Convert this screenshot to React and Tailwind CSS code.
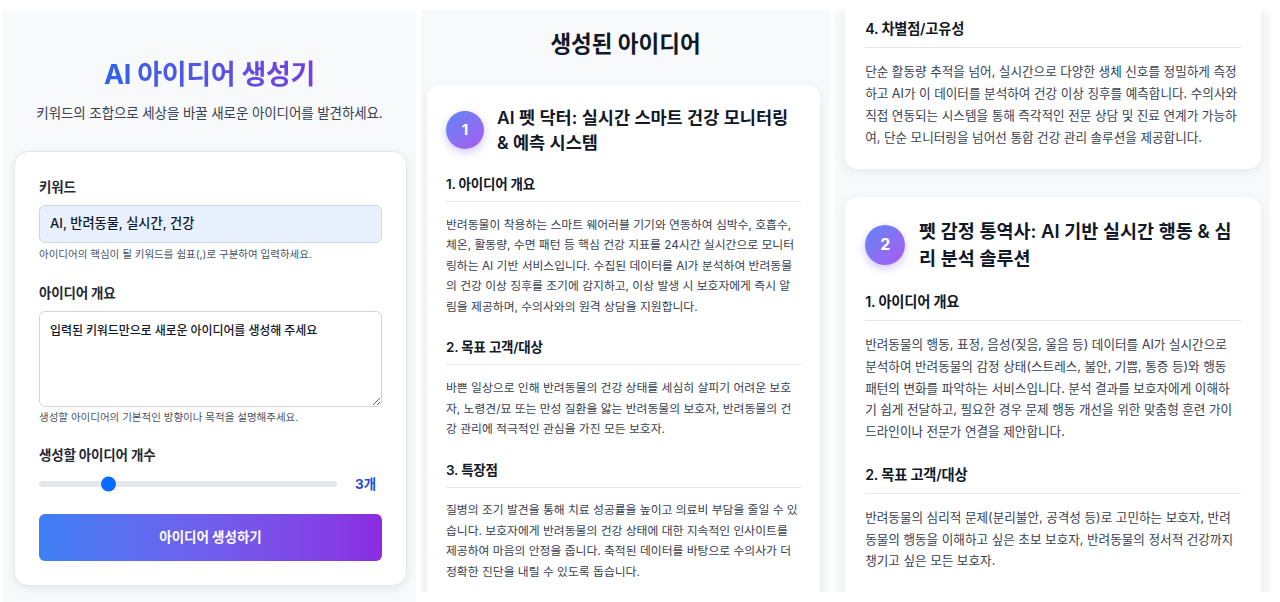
import React from "react";

const sectionsA = [
  {
    h: "1. 아이디어 개요",
    p: "반려동물이 착용하는 스마트 웨어러블 기기와 연동하여 심박수, 호흡수, 체온, 활동량, 수면 패턴 등 핵심 건강 지표를 24시간 실시간으로 모니터링하는 AI 기반 서비스입니다. 수집된 데이터를 AI가 분석하여 반려동물의 건강 이상 징후를 조기에 감지하고, 이상 발생 시 보호자에게 즉시 알림을 제공하며, 수의사와의 원격 상담을 지원합니다.",
  },
  {
    h: "2. 목표 고객/대상",
    p: "바쁜 일상으로 인해 반려동물의 건강 상태를 세심히 살피기 어려운 보호자, 노령견/묘 또는 만성 질환을 앓는 반려동물의 보호자, 반려동물의 건강 관리에 적극적인 관심을 가진 모든 보호자.",
  },
  {
    h: "3. 특장점",
    p: "질병의 조기 발견을 통해 치료 성공률을 높이고 의료비 부담을 줄일 수 있습니다. 보호자에게 반려동물의 건강 상태에 대한 지속적인 인사이트를 제공하여 마음의 안정을 줍니다. 축적된 데이터를 바탕으로 수의사가 더 정확한 진단을 내릴 수 있도록 돕습니다.",
  },
  {
    h: "4. 차별점/고유성",
    p: "단순 활동량 추적을 넘어, 실시간으로 다양한 생체 신호를 정밀하게 측정하고 AI가 이 데이터를 분석하여 건강 이상 징후를 예측합니다. 수의사와 직접 연동되는 시스템을 통해 즉각적인 전문 상담 및 진료 연계가 가능하여, 단순 모니터링을 넘어선 통합 건강 관리 솔루션을 제공합니다.",
  },
];

const sectionsB = [
  {
    h: "1. 아이디어 개요",
    p: "반려동물의 행동, 표정, 음성(짖음, 울음 등) 데이터를 AI가 실시간으로 분석하여 반려동물의 감정 상태(스트레스, 불안, 기쁨, 통증 등)와 행동 패턴의 변화를 파악하는 서비스입니다. 분석 결과를 보호자에게 이해하기 쉽게 전달하고, 필요한 경우 문제 행동 개선을 위한 맞춤형 훈련 가이드라인이나 전문가 연결을 제안합니다.",
  },
  {
    h: "2. 목표 고객/대상",
    p: "반려동물의 심리적 문제(분리불안, 공격성 등)로 고민하는 보호자, 반려동물의 행동을 이해하고 싶은 초보 보호자, 반려동물의 정서적 건강까지 챙기고 싶은 모든 보호자.",
  },
  {
    h: "3. 특장점",
    p: "반려동물의 감정과 행동을 객관적인 데이터로 이해할 수 있어 보호자와 반려동물 사이의 교감을 깊게 합니다.",
  },
];

const P_MAIN = "mt-[12.5px] text-[11.82px] leading-[20.6px] text-[#374151]";
const P_ZOOMED = "mt-[12.5px] text-[11.91px] leading-[20.6px] text-[#374151]";

function Section({ h, p, first, pClass }) {
  return (
    <div className={first ? "" : "mt-[20px]"}>
      <div className="text-[13.5px] leading-[20px] font-semibold text-[#111827] tracking-[-0.2px] pb-[7px] border-b border-[#e5e7eb]">
        {h}
      </div>
      <p className={pClass}>{p}</p>
    </div>
  );
}

function IdeaCard({ num, title, sections, pClass }) {
  return (
    <div className="w-[393px] bg-white rounded-xl shadow-[0_2px_10px_rgba(0,0,0,0.07)] px-[19px] pt-[20px] pb-[20px]">
      <div className="flex items-center gap-[13px]">
        <div className="w-[38px] h-[38px] shrink-0 rounded-full bg-linear-to-br from-[#5a84f6] to-[#a55af0] text-white font-bold text-[15px] flex items-center justify-center shadow-[0_3px_8px_rgba(110,90,240,0.35)]">
          {num}
        </div>
        <div className="text-[17.5px] leading-[25px] font-semibold text-[#111827]">
          {title}
        </div>
      </div>
      <div className="mt-[19px]">
        {sections.map((s, i) => (
          <Section key={i} h={s.h} p={s.p} first={i === 0} pClass={pClass} />
        ))}
      </div>
    </div>
  );
}

function FormPanel() {
  return (
    <div className="mt-[11px] w-[413px] h-[591px] shrink-0 bg-[#f8f9fb] pt-[48px]">
      <h1 className="text-center text-[27px] leading-[32px] font-bold tracking-[-0.3px]">
        <span className="bg-linear-to-r from-[#2f62ea] to-[#7141de] bg-clip-text text-transparent">
          AI 아이디어 생성기
        </span>
      </h1>
      <p className="mt-[12px] text-center text-[13.5px] leading-[20px] text-[#374151] tracking-[-0.1px]">
        키워드의 조합으로 세상을 바꿀 새로운 아이디어를 발견하세요.
      </p>
      <div className="mt-[28px] ml-[11px] w-[393px] bg-white border border-[#e5e7eb] rounded-[14px] shadow-[0_3px_10px_rgba(0,0,0,0.07)] px-[24px] pt-[25px] pb-[24px]">
        <div className="text-[13.5px] leading-[20px] font-semibold text-[#1f2937] tracking-[-0.2px]">
          키워드
        </div>
        <div className="mt-[8px] h-[38px] rounded-[6px] border border-[#cfd6e0] bg-[#e8f0fe] px-[10px] flex items-center text-[13.2px] font-medium text-[#111827]">
          AI, 반려동물, 실시간, 건강
        </div>
        <div className="mt-[4px] text-[10.5px] leading-[16px] text-[#4b5563]">
          아이디어의 핵심이 될 키워드를 쉼표(,)로 구분하여 입력하세요.
        </div>

        <div className="mt-[20px] text-[13.5px] leading-[20px] font-semibold text-[#1f2937] tracking-[-0.2px]">
          아이디어 개요
        </div>
        <textarea
          readOnly
          defaultValue="입력된 키워드만으로 새로운 아이디어를 생성해 주세요"
          className="mt-[8px] block w-full h-[96px] rounded-[6px] border border-[#d1d5db] bg-white p-[10px] text-[12px] leading-[18px] font-medium text-[#111827] tracking-[-0.1px] outline-none"
        />
        <div className="mt-[3px] text-[10.5px] leading-[16px] text-[#4b5563]">
          생성할 아이디어의 기본적인 방향이나 목적을 설명해주세요.
        </div>

        <div className="mt-[19px] text-[13.5px] leading-[20px] font-semibold text-[#1f2937] tracking-[-0.2px]">
          생성할 아이디어 개수
        </div>
        <div className="mt-[9px] h-[20px] flex items-center gap-[18px]">
          <div className="relative flex-1 h-[6px] rounded-full bg-[#e5e7eb]">
            <div className="absolute left-[62px] top-1/2 -translate-y-1/2 w-[15px] h-[15px] rounded-full bg-[#0b6bff]" />
          </div>
          <div className="w-[27px] text-[13.5px] font-bold text-[#1d4ed8]">3개</div>
        </div>

        <div className="mt-[20px] h-[47px] rounded-[6px] bg-linear-to-r from-[#3b80f5] to-[#8a2ce2] flex items-center justify-center text-white text-[13.5px] font-bold">
          아이디어 생성하기
        </div>
      </div>
    </div>
  );
}

function ResultPanel() {
  return (
    <div className="mt-[10px] w-[409px] h-[582px] shrink-0 bg-[#f8f9fb] overflow-hidden pt-[20px]">
      <h2 className="text-center text-[22.5px] leading-[28px] font-bold text-[#111827]">
        생성된 아이디어
      </h2>
      <div className="mt-[27px] ml-[6px]">
        <IdeaCard
          num="1"
          title="AI 펫 닥터: 실시간 스마트 건강 모니터링 & 예측 시스템"
          sections={sectionsA}
          pClass={P_MAIN}
        />
      </div>
    </div>
  );
}

function ScrolledPanel() {
  return (
    <div className="mt-[10px] w-[435px] h-[582px] shrink-0 bg-[#f8f9fb] overflow-hidden">
      <div className="[zoom:1.058]">
        <div className="ml-[9.5px] w-[393px] bg-white rounded-b-xl shadow-[0_2px_10px_rgba(0,0,0,0.07)] px-[19px] pt-[8px] pb-[19px]">
          <Section h={sectionsA[3].h} p={sectionsA[3].p} first pClass={P_ZOOMED} />
        </div>
        <div className="mt-[27px] ml-[9.5px]">
          <IdeaCard
            num="2"
            title="펫 감정 통역사: AI 기반 실시간 행동 & 심리 분석 솔루션"
            sections={sectionsB}
            pClass={P_ZOOMED}
          />
        </div>
      </div>
    </div>
  );
}

export default function App() {
  return (
    <div className="w-[1280px] h-[602px] overflow-hidden bg-white flex items-start pl-[3px] gap-[5px] font-[Inter,'Noto_Sans_CJK_KR',sans-serif]">
      <FormPanel />
      <ResultPanel />
      <ScrolledPanel />
    </div>
  );
}
